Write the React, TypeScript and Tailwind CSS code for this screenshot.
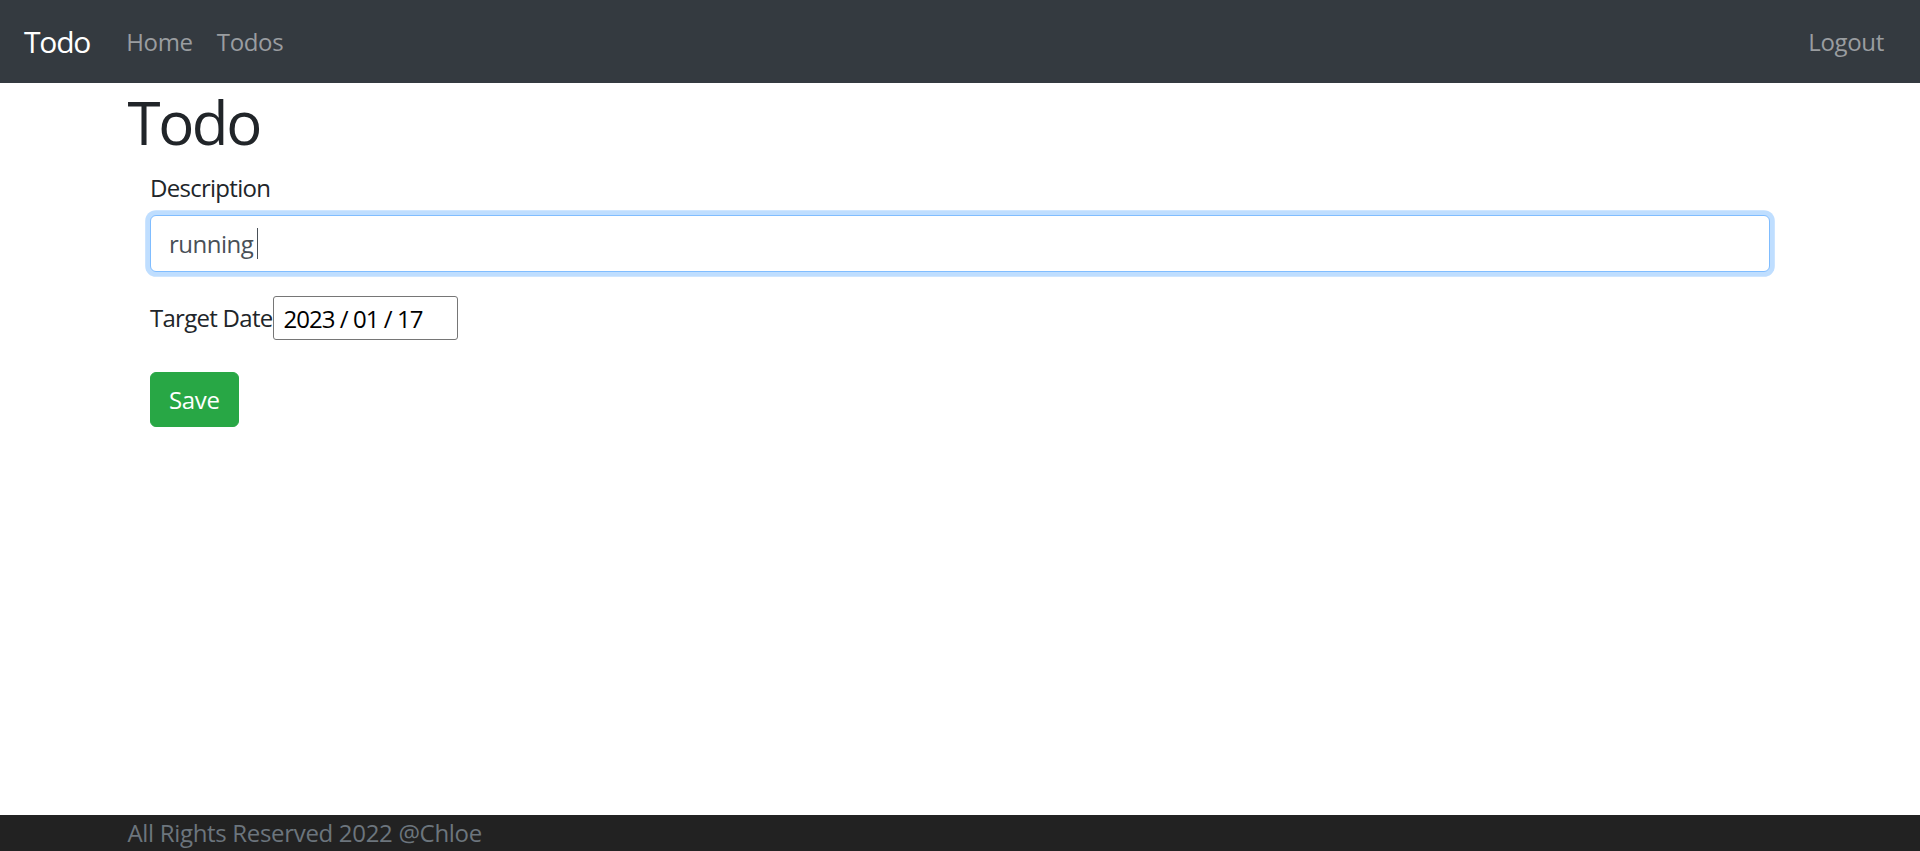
export default function App() {
  const navLinks = ['Home', 'Todos'];

  return (
    <div
      className="flex flex-col min-h-screen bg-white tracking-[-0.02em]"
      style={{ fontFamily: '"Open Sans", "Noto Sans", sans-serif' }}
    >
      <nav className="flex items-center h-[83px] px-[24px] bg-[#343a40]">
        <a href="#" className="mr-[24px] text-[30px] leading-[1.5] tracking-[-0.04em] text-white">
          Todo
        </a>
        <ul className="flex">
          {navLinks.map((link) => (
            <li key={link}>
              <a href="#" className="px-[12px] text-[24px] leading-[1.5] text-[#9a9da0]">
                {link}
              </a>
            </li>
          ))}
        </ul>
        <ul className="flex ml-auto">
          <li>
            <a href="#" className="px-[12px] text-[24px] leading-[1.5] text-[#9a9da0]">
              Logout
            </a>
          </li>
        </ul>
      </nav>

      <main className="w-[1710px] mx-auto px-[22.5px]">
        <h1 className="mt-[3px] mb-[12px] text-[60px] leading-[1.2] font-normal tracking-[-0.04em] text-[#212529]">
          Todo
        </h1>
        <form className="px-[22.5px]" onSubmit={(e) => e.preventDefault()}>
          <fieldset className="mb-[24px]">
            <label className="block mb-[9px] text-[24px] leading-[1.5] tracking-[-0.03em] text-[#212529]">
              Description
            </label>
            <div className="relative">
              <input
                type="text"
                defaultValue="running"
                className="block w-full h-[57px] px-[18px] text-[24px] tracking-[-0.02em] text-[#495057] bg-white border border-[#80bdff] rounded-[6px] outline-none caret-transparent shadow-[0_0_0_4.8px_rgba(0,123,255,0.25)]"
              />
              {/* static text cursor, as in the screenshot */}
              <span className="absolute left-[107px] top-[13px] w-px h-[31px] bg-[#495057]" />
            </div>
          </fieldset>
          <fieldset className="flex items-center mb-[32px]">
            <label className="text-[24px] leading-[1.5] tracking-[-0.03em] text-[#212529]">Target Date</label>
            <input
              type="text"
              readOnly
              value="2023 / 01 / 17"
              className="w-[185px] h-[44px] px-[10px] text-[24px] tracking-[-0.04em] text-black bg-white border border-[#767676] rounded-[3px] outline-none"
            />
          </fieldset>
          <button
            type="submit"
            className="h-[55px] px-[18px] text-[24px] leading-[1.5] text-white bg-[#28a745] border border-[#28a745] rounded-[6px]"
          >
            Save
          </button>
        </form>
      </main>

      <footer className="mt-auto h-[36px] bg-[#222222] overflow-hidden">
        <div className="w-[1710px] mx-auto px-[22.5px]">
          <span className="text-[24px] leading-[36px] text-[#6c757d]">
            All Rights Reserved 2022 @Chloe
          </span>
        </div>
      </footer>
    </div>
  );
}
